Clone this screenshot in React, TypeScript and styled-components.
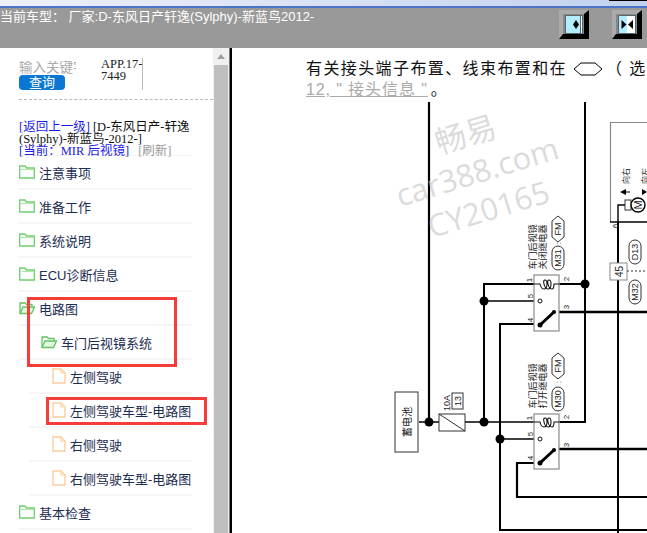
import React from 'react'
import styled, { createGlobalStyle } from 'styled-components'

const CJK = `"Liberation Sans", "Noto Sans CJK SC", sans-serif`
const SERIF = `"Liberation Serif", "Noto Sans CJK SC", serif`

const GlobalStyle = createGlobalStyle`
  html, body {
    margin: 0;
    padding: 0;
    background: #fff;
  }
`

type TreeItem = {
  label: string
  kind: 'folder' | 'open' | 'file'
  level: 0 | 1 | 2
}

const tree: TreeItem[] = [
  { label: '注意事项', kind: 'folder', level: 0 },
  { label: '准备工作', kind: 'folder', level: 0 },
  { label: '系统说明', kind: 'folder', level: 0 },
  { label: 'ECU诊断信息', kind: 'folder', level: 0 },
  { label: '电路图', kind: 'open', level: 0 },
  { label: '车门后视镜系统', kind: 'open', level: 1 },
  { label: '左侧驾驶', kind: 'file', level: 2 },
  { label: '左侧驾驶车型-电路图', kind: 'file', level: 2 },
  { label: '右侧驾驶', kind: 'file', level: 2 },
  { label: '右侧驾驶车型-电路图', kind: 'file', level: 2 },
  { label: '基本检查', kind: 'folder', level: 0 },
]

export default function App() {
  return (
    <Page>
      <GlobalStyle />
      <TitleStrip>
        <StripEdge />
      </TitleStrip>
      <TopBar>
        <CarTitle>当前车型： 厂家:D-东风日产轩逸(Sylphy)-新蓝鸟2012-</CarTitle>
        <ToolButtons>
          <BevelButton>
            <svg width="18" height="19" viewBox="0 0 18 19">
              <rect x="0.5" y="0.5" width="17" height="18" fill="#b4ecff" stroke="#56666c" />
              <rect x="16" y="1" width="1" height="17" fill="#fff" />
              <line x1="15.5" y1="1" x2="15.5" y2="18" stroke="#56666c" />
              <path d="M8 9.5 L11 5 L14 9.5 L11 14 Z" fill="#000" />
            </svg>
          </BevelButton>
          <BevelButton>
            <svg width="18" height="19" viewBox="0 0 18 19">
              <rect x="0.5" y="0.5" width="17" height="18" fill="#b4ecff" stroke="#56666c" />
              <rect x="9" y="1" width="8" height="17" fill="#fff" />
              <path d="M3.5 5 L8.5 9.5 L3.5 14 Z" fill="#000" />
              <path d="M15 5 L10 9.5 L15 14 Z" fill="#000" />
            </svg>
          </BevelButton>
        </ToolButtons>
      </TopBar>
      <Body>
        <Sidebar>
          <SearchRow>
            <SearchForm>
              <KeywordInput>输入关键字</KeywordInput>
              <SearchButton>查询</SearchButton>
            </SearchForm>
            <DocCode>
              APP.17-
              <br />
              7449
            </DocCode>
          </SearchRow>
          <Crumbs>
            <BlueLink>[返回上一级]</BlueLink> [D-东风日产-轩逸
            <br />
            (Sylphy)-新蓝鸟-2012-]
            <br />
            <BlueLink>[当前：MIR 后视镜]</BlueLink> <GrayLink>[刷新]</GrayLink>
          </Crumbs>
          {tree.map(item => (
            <TreeRow key={item.label} $level={item.level}>
              {item.kind === 'file' ? <FileIcon /> : <FolderIcon open={item.kind === 'open'} />}
              <span>{item.label}</span>
            </TreeRow>
          ))}
          <RedBoxTree />
          <RedBoxLeaf />
        </Sidebar>
        <Scrollbar>
          <ScrollArrow />
          <ScrollThumb />
        </Scrollbar>
        <Divider />
        <Main>
          <Note>
            <NoteLine>
              有关接头端子布置、线束布置和在
              <HexMark width="30" height="14" viewBox="0 0 30 14">
                <path d="M1 7 L8 1 H22 L29 7 L22 13 H8 Z" fill="none" stroke="#000" />
              </HexMark>
              （ 选择
            </NoteLine>
            <NoteLine>
              <NoteLink>12, " 接头信息 "</NoteLink>。
            </NoteLine>
          </Note>
          <Diagram />
          <Watermark>
            <span>畅易</span>
            <span>car388.com</span>
            <span>CY20165</span>
          </Watermark>
        </Main>
      </Body>
    </Page>
  )
}

function FolderIcon({ open }: { open: boolean }) {
  return (
    <TreeIcon width="16" height="14" viewBox="0 0 16 14">
      {open ? (
        <>
          <path d="M1 12 V2 H6 L7.5 3.5 H13 V6" fill="#fff" stroke="#62c462" strokeWidth="1.3" />
          <path d="M1 12.5 L4 6 H15.5 L12.5 12.5 Z" fill="#e4f7e0" stroke="#62c462" strokeWidth="1.3" />
        </>
      ) : (
        <>
          <path d="M0.7 13 V1 H6 L7.5 3 H15.3 V13 Z" fill="#fff" stroke="#6ccf6c" strokeWidth="1.3" />
          <line x1="1" y1="4.5" x2="15" y2="4.5" stroke="#b5e6b0" strokeWidth="1.2" />
        </>
      )}
    </TreeIcon>
  )
}

function FileIcon() {
  return (
    <TreeIcon width="14" height="16" viewBox="0 0 14 16">
      <path d="M1 1 H9 L13 5 V15 H1 Z" fill="#fff" stroke="#fbcf9c" strokeWidth="1.4" />
      <path d="M9 1 V5 H13" fill="none" stroke="#fbcf9c" strokeWidth="1.2" />
    </TreeIcon>
  )
}

function Dot({ x, y }: { x: number; y: number }) {
  return <circle cx={x} cy={y} r="4.5" fill="#000" />
}

function VText({ x, y, size = 8, children }: { x: number; y: number; size?: number; children: React.ReactNode }) {
  return (
    <text
      x={x}
      y={y}
      transform={`rotate(-90 ${x} ${y})`}
      fontSize={size}
      fontFamily={CJK}
      textAnchor="middle"
      dominantBaseline="central"
      fill="#222"
    >
      {children}
    </text>
  )
}

function Pill({ x, y, label }: { x: number; y: number; label: string }) {
  return (
    <>
      <rect x={x - 6} y={y - 12} width="12" height="24" rx="6" fill="#fff" stroke="#333" />
      <VText x={x} y={y} size={9}>
        {label}
      </VText>
    </>
  )
}

function Hex({ x, y }: { x: number; y: number }) {
  return (
    <>
      <path
        d={`M${x} ${y - 13} L${x + 6} ${y - 8} V${y + 8} L${x} ${y + 13} L${x - 6} ${y + 8} V${y - 8} Z`}
        fill="#fff"
        stroke="#333"
      />
      <VText x={x} y={y} size={9}>
        FM
      </VText>
    </>
  )
}

function Coil({ y }: { y: number }) {
  return (
    <path
      d={`M534 ${y} H540 q1 5 4 5 q3 0 3 -5 q0 -4 -2 -4 q-2 0 -1 4 q1 5 4 5 q3 0 3 -5 q0 -4 -2 -4 q-2 0 -1 4 q1 5 4 5 q2 0 2 -5 H560`}
      fill="none"
      stroke="#111"
      strokeWidth="1.1"
    />
  )
}

function Relay({ top, height, coilY, topLine, bottomLine }: {
  top: number
  height: number
  coilY: number
  topLine: string
  bottomLine: string
}) {
  const contact = coilY + 17
  const pole = coilY + 41
  const throwPoint = coilY + 28
  return (
    <g>
      <rect x="534" y={top} width="25" height={height} fill="#fff" stroke="#8a8a8a" strokeWidth="1.2" />
      <Coil y={coilY} />
      <circle cx="540" cy={contact} r="2" fill="#fff" stroke="#111" />
      <line x1="540" y1={pole} x2="554" y2={throwPoint} stroke="#000" strokeWidth="3" />
      <circle cx="540" cy={pole} r="2.5" fill="#000" />
      <circle cx="554" cy={throwPoint} r="2" fill="#000" />
      <VText x={533} y={top - 28} size={9}>
        {topLine}
      </VText>
      <VText x={543} y={top - 28} size={9}>
        {bottomLine}
      </VText>
      <VText x={529} y={coilY - 4}>1</VText>
      <VText x={566} y={coilY - 5}>2</VText>
      <VText x={530} y={contact - 5}>5</VText>
      <VText x={530} y={pole - 5}>4</VText>
      <VText x={566} y={throwPoint - 5}>3</VText>
    </g>
  )
}

function Diagram() {
  return (
    <DiagramSvg viewBox="232 102 415 431" width="415" height="431">
      <g fill="none" stroke="#000" strokeWidth="2">
        <path d="M429 102 V422" strokeWidth="2.2" />
        <path d="M585 102 V422 H560" strokeWidth="2" />
        <path d="M618 222 V533" />
        <path d="M484 422 V284 H534" />
        <path d="M560 284 H585" />
        <path d="M484 301 H538" strokeWidth="1.4" />
        <path d="M540 324 H500 V530 H647" />
        <path d="M500 439 H538" strokeWidth="1.4" />
        <path d="M559 312 H647" strokeWidth="2.4" />
        <path d="M559 449 H647" strokeWidth="2.4" />
        <path d="M540 463 H517 V497 H647" strokeWidth="2.2" />
        <path d="M419 422 H439 M465 422 H534" strokeWidth="1.6" />
      </g>

      <Relay top={275} height={56} coilY={284} topLine="车门后视镜" bottomLine="关闭继电器" />
      <Relay top={414} height={55} coilY={422} topLine="车门后视镜" bottomLine="打开继电器" />

      <Hex x={558} y={229} />
      <Pill x={558} y={258} label="M31" />
      <VText x={558} y={243} size={8}>:</VText>
      <Hex x={558} y={366} />
      <Pill x={558} y={399} label="M30" />
      <VText x={558} y={382} size={8}>:</VText>

      <Dot x={585} y={284} />
      <Dot x={484} y={301} />
      <Dot x={429} y={422} />
      <Dot x={484} y={422} />
      <Dot x={500} y={439} />

      <rect x="395" y="392" width="23" height="60" fill="#fff" stroke="#333" />
      <VText x={407} y={422} size={10}>蓄电池</VText>

      <rect x="439" y="414" width="26" height="17" fill="#fff" stroke="#333" />
      <line x1="439" y1="414" x2="465" y2="431" stroke="#333" />
      <VText x={447} y={403} size={9}>10A</VText>
      <rect x="452" y="393" width="11" height="16" fill="#fff" stroke="#333" />
      <VText x={458} y={401} size={9}>13</VText>

      <path d="M647 122.5 H610.5 V222" fill="none" stroke="#888" strokeWidth="1.2" />
      <path d="M610 222 H647" stroke="#000" strokeWidth="1.4" />
      <VText x={615} y={226} size={8}>6</VText>
      <VText x={626} y={176} size={8}>向右</VText>
      <VText x={645} y={176} size={8}>向左</VText>
      <path d="M620 192 L626 189 V191.5 H630 V192.5 H626 V195 Z" fill="#000" />
      <path d="M647 192 L642 189 V195 Z" fill="#000" />
      <path d="M618 222 V205 H627" fill="none" stroke="#000" strokeWidth="1.4" />
      <rect x="625" y="200" width="6" height="10" fill="#fff" stroke="#333" />
      <circle cx="638" cy="205" r="7" fill="#fff" stroke="#000" strokeWidth="1.4" />
      <VText x={638} y={205} size={11}>M</VText>

      <rect x="610" y="263" width="17" height="17" fill="#fff" stroke="#888" />
      <VText x={619} y={271.5} size={10}>45</VText>
      <path d="M627 271 H647" stroke="#333" strokeDasharray="2 2" />
      <Pill x={635} y={252} label="D13" />
      <Pill x={635} y={292} label="M32" />
    </DiagramSvg>
  )
}

const Page = styled.div`
  width: 647px;
  height: 533px;
  overflow: hidden;
  display: flex;
  flex-direction: column;
  font-family: ${CJK};
`

const TitleStrip = styled.div`
  height: 6px;
  flex: none;
  display: flex;
  justify-content: flex-end;
  border-bottom: 2px solid #4c74c8;
  background: linear-gradient(90deg, #eef1fb, #c3d1ee);
`

const StripEdge = styled.div`
  width: 38px;
  height: 1px;
  background: #000;
`

const TopBar = styled.div`
  height: 40px;
  flex: none;
  display: flex;
  justify-content: space-between;
  background: #999;
`

const CarTitle = styled.div`
  padding-top: 1px;
  font-size: 13px;
  line-height: 15px;
  color: #fff;
  white-space: nowrap;
`

const ToolButtons = styled.div`
  display: flex;
  gap: 23px;
  padding: 2px 5px 0 0;
`

const BevelButton = styled.div`
  width: 30px;
  height: 29px;
  box-sizing: border-box;
  display: flex;
  align-items: center;
  justify-content: center;
  border-style: solid;
  border-width: 4px 5px 5px 4px;
  border-color: #aaa #000 #000 #aaa;
  background: #888;
`

const Body = styled.div`
  flex: 1;
  display: flex;
  min-height: 0;
`

const Sidebar = styled.div`
  position: relative;
  width: 213px;
  flex: none;
  overflow: hidden;
  background: #fff;
`

const SearchRow = styled.div`
  display: flex;
  height: 52px;
  margin-left: 19px;
  padding-top: 10px;
  box-sizing: border-box;
  border-bottom: 1px dashed #bbb;
  align-items: flex-start;
`

const SearchForm = styled.div`
  width: 82px;
  flex: none;
  padding-top: 3px;
`

const KeywordInput = styled.div`
  width: 57px;
  height: 14px;
  overflow: hidden;
  white-space: nowrap;
  font-size: 13.5px;
  line-height: 14px;
  color: #aaa;
`

const SearchButton = styled.div`
  width: 46px;
  height: 15px;
  border-radius: 4px;
  background: #0a78d2;
  color: #fff;
  font-size: 13px;
  line-height: 15px;
  text-align: center;
`

const DocCode = styled.div`
  width: 41px;
  height: 32px;
  border-right: 1px solid #bbb;
  font-family: ${SERIF};
  font-size: 12.5px;
  line-height: 12px;
  color: #222;
  white-space: nowrap;
`

const Crumbs = styled.div`
  width: 173px;
  height: 34px;
  margin: 21px 0 0 19px;
  border-bottom: 1px solid #f2f2f2;
  font-family: ${SERIF};
  font-size: 12.5px;
  line-height: 12px;
  color: #111;
  white-space: nowrap;
`

const BlueLink = styled.span`
  color: #1a1aee;
`

const GrayLink = styled.span`
  margin-left: 6px;
  color: #999;
`

const TreeRow = styled.div<{ $level: number }>`
  height: 34px;
  box-sizing: border-box;
  display: flex;
  align-items: center;
  gap: 4px;
  width: ${p => (p.$level === 2 ? 163 : 173)}px;
  margin-left: ${p => (p.$level === 2 ? 29 : 19)}px;
  padding-left: ${p => (p.$level === 1 ? 22 : p.$level === 2 ? 23 : 0)}px;
  border-bottom: 2px solid #f5f5f5;
  font-size: 13px;
  color: #1c2d52;
  white-space: nowrap;
`

const TreeIcon = styled.svg`
  flex: none;
`

const RedBoxTree = styled.div`
  position: absolute;
  left: 27px;
  top: 249px;
  width: 144px;
  height: 64px;
  border: 3px solid #f63b3b;
`

const RedBoxLeaf = styled.div`
  position: absolute;
  left: 46px;
  top: 349px;
  width: 155px;
  height: 22px;
  border: 3px solid #f63b3b;
`

const Scrollbar = styled.div`
  width: 16px;
  flex: none;
  display: flex;
  flex-direction: column;
  align-items: center;
  box-sizing: border-box;
  padding-top: 6px;
  background: #f0f0f0;
`

const ScrollArrow = styled.div`
  width: 0;
  height: 0;
  border-left: 4px solid transparent;
  border-right: 4px solid transparent;
  border-bottom: 5px solid #a0a0a0;
  margin-bottom: 6px;
`

const ScrollThumb = styled.div`
  width: 14px;
  flex: 1;
  background: #bfbfbf;
`

const Divider = styled.div`
  width: 3px;
  flex: none;
  border-left: 1px solid #777;
  box-sizing: border-box;
  background: #000;
`

const Main = styled.div`
  position: relative;
  flex: 1;
  overflow: hidden;
  background: #fff;
`

const Note = styled.div`
  height: 54px;
  box-sizing: border-box;
  padding: 10px 0 0 74px;
  font-size: 16px;
  line-height: 21px;
  letter-spacing: 1.4px;
  color: #111;
  white-space: nowrap;
`

const NoteLine = styled.div`
  display: flex;
  align-items: center;
  gap: 3px;
`

const HexMark = styled.svg`
  flex: none;
  margin-left: 3px;
`

const NoteLink = styled.span`
  color: #aaa;
  letter-spacing: 0.9px;
  text-decoration: underline;
`

const DiagramSvg = styled.svg`
  display: block;
`

const Watermark = styled.div`
  position: absolute;
  left: 160px;
  top: 65px;
  width: 170px;
  display: flex;
  flex-direction: column;
  align-items: center;
  transform: rotate(-17deg);
  color: rgba(195, 195, 195, 0.6);
  font-family: "Open Sans", "Noto Sans CJK SC", sans-serif;
  font-size: 31px;
  line-height: 39px;
  pointer-events: none;
`
